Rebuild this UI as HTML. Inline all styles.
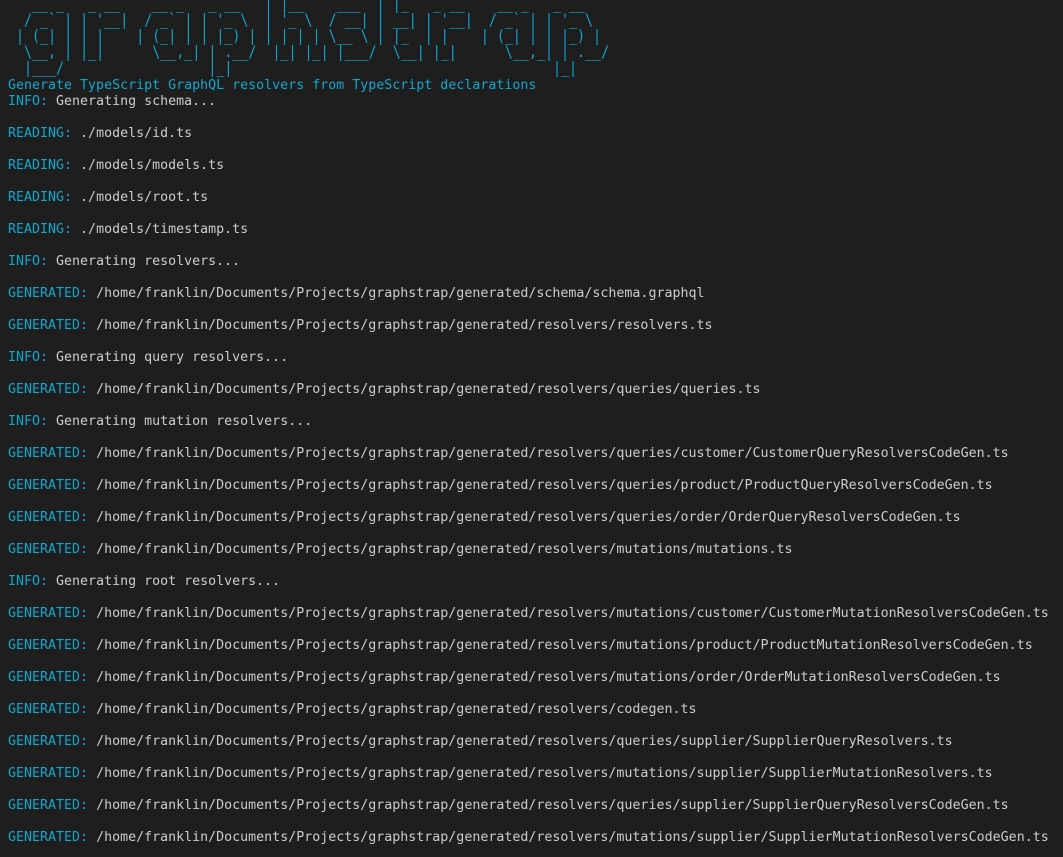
<!DOCTYPE html>
<html><head><meta charset="utf-8"><style>
html,body{margin:0;padding:0;background:#1e1e1e;width:1063px;height:857px;overflow:hidden}
body{font-family:"DejaVu Sans Mono","Liberation Mono",monospace;color:#cccccc;position:relative}
.art{position:absolute;left:8px;top:-20px;font-size:16px;line-height:16px;color:#11a8cd;white-space:pre;margin:0;font-family:inherit;transform:scaleX(0.832);transform-origin:0 0}
.log{position:absolute;left:8px;top:78px;font-size:13.3px;line-height:16px;white-space:pre;margin:0;font-family:inherit}
.c{color:#11a8cd}
</style></head><body>
<pre class="art">                                  _                 _
   __ _   _ __    __ _   _ __   | |__    ___  | |_   _ __    __ _   _ __
  / _` | | '__|  / _` | | '_ \  | '_ \  / __| | __| | '__|  / _` | | '_ \
 | (_| | | |    | (_| | | |_) | | | | | \__ \ | |_  | |    | (_| | | |_) |
  \__, | |_|      \__,_| | .__/  |_| |_| |___/  \__| |_|      \__,_| | .__/
  |___/                  |_|                                        |_|</pre>
<pre class="log"><span class="c">Generate TypeScript GraphQL resolvers from TypeScript declarations</span>
<span class="c">INFO:</span> Generating schema...

<span class="c">READING:</span> ./models/id.ts

<span class="c">READING:</span> ./models/models.ts

<span class="c">READING:</span> ./models/root.ts

<span class="c">READING:</span> ./models/timestamp.ts

<span class="c">INFO:</span> Generating resolvers...

<span class="c">GENERATED:</span> /home/franklin/Documents/Projects/graphstrap/generated/schema/schema.graphql

<span class="c">GENERATED:</span> /home/franklin/Documents/Projects/graphstrap/generated/resolvers/resolvers.ts

<span class="c">INFO:</span> Generating query resolvers...

<span class="c">GENERATED:</span> /home/franklin/Documents/Projects/graphstrap/generated/resolvers/queries/queries.ts

<span class="c">INFO:</span> Generating mutation resolvers...

<span class="c">GENERATED:</span> /home/franklin/Documents/Projects/graphstrap/generated/resolvers/queries/customer/CustomerQueryResolversCodeGen.ts

<span class="c">GENERATED:</span> /home/franklin/Documents/Projects/graphstrap/generated/resolvers/queries/product/ProductQueryResolversCodeGen.ts

<span class="c">GENERATED:</span> /home/franklin/Documents/Projects/graphstrap/generated/resolvers/queries/order/OrderQueryResolversCodeGen.ts

<span class="c">GENERATED:</span> /home/franklin/Documents/Projects/graphstrap/generated/resolvers/mutations/mutations.ts

<span class="c">INFO:</span> Generating root resolvers...

<span class="c">GENERATED:</span> /home/franklin/Documents/Projects/graphstrap/generated/resolvers/mutations/customer/CustomerMutationResolversCodeGen.ts

<span class="c">GENERATED:</span> /home/franklin/Documents/Projects/graphstrap/generated/resolvers/mutations/product/ProductMutationResolversCodeGen.ts

<span class="c">GENERATED:</span> /home/franklin/Documents/Projects/graphstrap/generated/resolvers/mutations/order/OrderMutationResolversCodeGen.ts

<span class="c">GENERATED:</span> /home/franklin/Documents/Projects/graphstrap/generated/resolvers/codegen.ts

<span class="c">GENERATED:</span> /home/franklin/Documents/Projects/graphstrap/generated/resolvers/queries/supplier/SupplierQueryResolvers.ts

<span class="c">GENERATED:</span> /home/franklin/Documents/Projects/graphstrap/generated/resolvers/mutations/supplier/SupplierMutationResolvers.ts

<span class="c">GENERATED:</span> /home/franklin/Documents/Projects/graphstrap/generated/resolvers/queries/supplier/SupplierQueryResolversCodeGen.ts

<span class="c">GENERATED:</span> /home/franklin/Documents/Projects/graphstrap/generated/resolvers/mutations/supplier/SupplierMutationResolversCodeGen.ts</pre>
</body></html>
